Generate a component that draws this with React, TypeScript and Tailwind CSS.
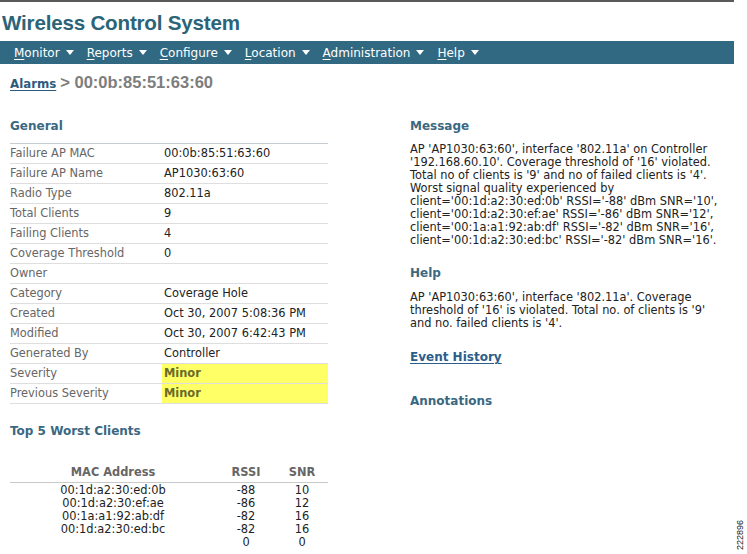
import React from "react";

const general: [string, string, boolean?][] = [
  ["Failure AP MAC", "00:0b:85:51:63:60"],
  ["Failure AP Name", "AP1030:63:60"],
  ["Radio Type", "802.11a"],
  ["Total Clients", "9"],
  ["Failing Clients", "4"],
  ["Coverage Threshold", "0"],
  ["Owner", ""],
  ["Category", "Coverage Hole"],
  ["Created", "Oct 30, 2007 5:08:36 PM"],
  ["Modified", "Oct 30, 2007 6:42:43 PM"],
  ["Generated By", "Controller"],
  ["Severity", "Minor", true],
  ["Previous Severity", "Minor", true],
];

const clients = [
  ["00:1d:a2:30:ed:0b", "-88", "10"],
  ["00:1d:a2:30:ef:ae", "-86", "12"],
  ["00:1a:a1:92:ab:df", "-82", "16"],
  ["00:1d:a2:30:ed:bc", "-82", "16"],
  ["", "0", "0"],
];

const nav = ["Monitor", "Reports", "Configure", "Location", "Administration", "Help"];

function Tri() {
  return (
    <svg width="8" height="5" viewBox="0 0 8 5" className="ml-[6px] inline-block">
      <path d="M0 0 H8 L4 5 Z" fill="#ffffff" />
    </svg>
  );
}

export default function App() {
  return (
    <div className="relative w-[747px] h-[554px] bg-white overflow-hidden font-['DejaVu_Sans',Verdana,sans-serif] text-[11.4px] text-[#222]">
      <div className="w-[734px]">
        <div className="h-[2px] bg-[#5a5a5a]" />
        <div className="h-[39px] pl-[2px] pt-[9px] font-['Liberation_Sans',Arial,sans-serif] font-bold text-[20.6px] leading-[24px] text-[#2b6478] tracking-[-0.2px]">
          Wireless Control System
        </div>
        <div className="h-[23px] bg-[#316982] flex items-center pl-[14px] gap-[13px] text-white text-[12px]">
          {nav.map((n) => (
            <span key={n} className="flex items-center">
              <span>
                <span className="underline underline-offset-2">{n[0]}</span>
                {n.slice(1)}
              </span>
              <Tri />
            </span>
          ))}
        </div>
        <div className="pl-[10px] pt-[6px] h-[46px] flex items-baseline font-bold">
          <span className="text-[11.8px] text-[#2e5a7e] underline underline-offset-2">Alarms</span>
          <span className="ml-[4px] font-['Liberation_Sans',Arial,sans-serif] text-[16.5px] text-[#7d7d7d]">&gt; 00:0b:85:51:63:60</span>
        </div>
        <div className="flex pt-[2px]">
          <div className="w-[318px] ml-[10px]">
            <div className="h-[22px] pt-[7px] text-[12px] font-bold text-[#3a6882] leading-[14px]">General</div>
            <div className="h-[10px] border-b border-[#c2ccd2]" />
            {general.map(([k, v, hl]) => (
              <div key={k} className="h-[20px] flex border-b border-[#dedede]">
                <div className="w-[152px] text-[#666] leading-[19px]">{k}</div>
                {hl ? (
                  <div className="flex-1 bg-[#ffff66] font-bold text-[#6b6b2a] leading-[19px] pl-[2px]">{v}</div>
                ) : (
                  <div className="flex-1 text-[#222] leading-[19px] pl-[2px]">{v}</div>
                )}
              </div>
            ))}
            <div className="pt-[20px] h-[61px] text-[12px] font-bold text-[#3a6882] leading-[14px]">Top 5 Worst Clients</div>
            <div className="flex border-b border-[#c9c9c9] h-[18px] font-bold text-[#666] leading-[14px]">
              <div className="w-[206px] text-center">MAC Address</div>
              <div className="w-[60px] text-center">RSSI</div>
              <div className="w-[52px] text-center">SNR</div>
            </div>
            <div className="pt-[1px]">
              {clients.map((c, i) => (
                <div key={i} className="flex h-[13px] leading-[13px] text-[#222]">
                  <div className="w-[206px] text-center">{c[0]}</div>
                  <div className="w-[60px] text-center">{c[1]}</div>
                  <div className="w-[52px] text-center">{c[2]}</div>
                </div>
              ))}
            </div>
          </div>
          <div className="ml-[82px] w-[324px]">
            <div className="h-[22px] pt-[7px] text-[12px] font-bold text-[#3a6882] leading-[14px]">Message</div>
            <div className="pt-[9px] leading-[13px]">
              AP 'AP1030:63:60', interface '802.11a' on Controller
              <br />
              '192.168.60.10'. Coverage threshold of '16' violated.
              <br />
              Total no of clients is '9' and no of failed clients is '4'.
              <br />
              Worst signal quality experienced by
              <br />
              client='00:1d:a2:30:ed:0b' RSSI='-88' dBm SNR='10',
              <br />
              client='00:1d:a2:30:ef:ae' RSSI='-86' dBm SNR='12',
              <br />
              client='00:1a:a1:92:ab:df' RSSI='-82' dBm SNR='16',
              <br />
              client='00:1d:a2:30:ed:bc' RSSI='-82' dBm SNR='16'.
            </div>
            <div className="pt-[19px] h-[44px] text-[12px] font-bold text-[#3a6882] leading-[14px]">Help</div>
            <div className="leading-[13px]">
              AP 'AP1030:63:60', interface '802.11a'. Coverage
              <br />
              threshold of '16' is violated. Total no. of clients is '9'
              <br />
              and no. failed clients is '4'.
            </div>
            <div className="pt-[20px] text-[12px] font-bold text-[#2a5e8c] underline underline-offset-2 leading-[14px]">Event History</div>
            <div className="pt-[30px] text-[12px] font-bold text-[#3a6882] leading-[14px]">Annotations</div>
          </div>
        </div>
      </div>
      <div className="absolute left-[735px] top-[550px] origin-top-left -rotate-90 font-['Liberation_Sans',Arial,sans-serif] text-[9px] leading-[10px] text-[#222]">
        222896
      </div>
    </div>
  );
}
